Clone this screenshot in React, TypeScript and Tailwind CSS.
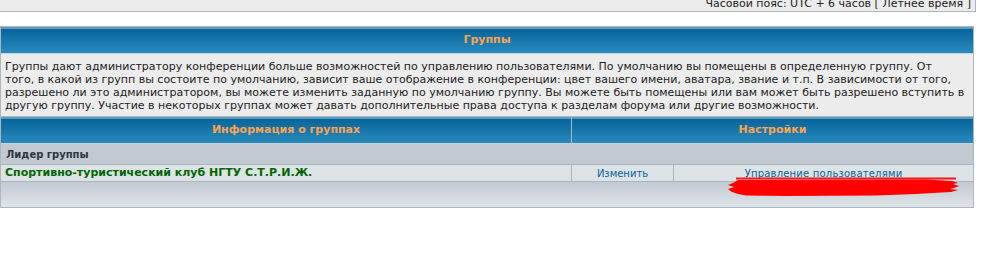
import React from "react";

const font = { fontFamily: '"DejaVu Sans", Verdana, sans-serif' };

export default function App() {
  return (
    <div className="w-[987px] h-[255px] bg-white relative overflow-hidden" style={font}>
      {/* top bar */}
      <div className="w-[976px] h-[12px] bg-[#ececec] border-b border-r border-[#aab6c0] overflow-hidden">
        <div className="-mt-[2px] pr-[4px] text-right text-[11px] leading-[11px] text-[#222]">
          Часовой пояс: UTC + 6 часов [ Летнее время ]
        </div>
      </div>

      {/* main table */}
      <div className="mt-[14px] w-[974px] border border-[#aab6c0]">
        {/* header */}
        <div className="h-[27px] bg-[linear-gradient(to_bottom,#5f99bb_0px,#5f99bb_2px,#06659a_2px,#2a8cbf_27px)] flex items-center justify-center border-b border-[#c9d2d9]">
          <span className="text-[11px] font-bold text-[#ffa34f]">Группы</span>
        </div>
        {/* description */}
        <div className="bg-[#ececec] px-[4px] pt-[6px] pb-[4px] text-[11px] leading-[13px] text-[#222] whitespace-nowrap border-b border-[#aab6c0]">
          <div>Группы дают администратору конференции больше возможностей по управлению пользователями. По умолчанию вы помещены в определенную группу. От</div>
          <div>того, в какой из групп вы состоите по умолчанию, зависит ваше отображение в конференции: цвет вашего имени, аватара, звание и т.п. В зависимости от того,</div>
          <div>разрешено ли это администратором, вы можете изменить заданную по умолчанию группу. Вы можете быть помещены или вам может быть разрешено вступить в</div>
          <div>другую группу. Участие в некоторых группах может давать дополнительные права доступа к разделам форума или другие возможности.</div>
        </div>
        {/* header row 2 */}
        <div className="h-[27px] flex bg-[linear-gradient(to_bottom,#5f99bb_0px,#5f99bb_2px,#06659a_2px,#2a8cbf_27px)] border-b border-[#c9d2d9]">
          <div className="w-[571px] flex items-center justify-center border-r border-[#aab6c0]">
            <span className="text-[11px] font-bold text-[#ffa34f]">Информация о группах</span>
          </div>
          <div className="flex-1 flex items-center justify-center">
            <span className="text-[11px] font-bold text-[#ffa34f]">Настройки</span>
          </div>
        </div>
        {/* leader */}
        <div className="h-[21px] bg-[#c2c9d1] flex items-center px-[5px] border-b border-[#aab6c0]">
          <span className="text-[10px] font-bold text-[#2d3640]">Лидер группы</span>
        </div>
        {/* group row */}
        <div className="h-[17px] bg-[#dde2e6] flex border-b border-[#aab6c0]">
          <div className="w-[571px] flex items-center px-[4px] border-r border-[#aab6c0]">
            <span className="text-[11px] font-bold text-[#006600]">Спортивно-туристический клуб НГТУ С.Т.Р.И.Ж.</span>
          </div>
          <div className="w-[102px] flex items-center justify-center border-r border-[#aab6c0]">
            <span className="text-[10px] text-[#006699]">Изменить</span>
          </div>
          <div className="flex-1 flex items-center justify-center">
            <span className="text-[10px] tracking-[0.2px] text-[#006699]">Управление пользователями</span>
          </div>
        </div>
        {/* footer */}
        <div className="h-[25px] bg-[linear-gradient(to_bottom,#c2c9d1,#dfe4e8)]" />
      </div>

      {/* red scribble overlay */}
      <svg className="absolute left-[726px] top-[175px]" width="236" height="24" viewBox="0 0 236 24">
        <path d="M10 3.5 L230 3.5" stroke="#ff0000" strokeWidth="2" fill="none" opacity="0.9" />
        <path
          d="M12 5 L200 4.5 L226 6 L232 8 L227 9 L233 11 L228 13 L224 14 L232 15 L225 17 L190 19 L150 20.5 L60 21 L20 20.5 L12 19 L6 17 L2 14 L8 12 L2 10 L7 8 Z"
          fill="#ff0000"
        />
      </svg>
    </div>
  );
}
